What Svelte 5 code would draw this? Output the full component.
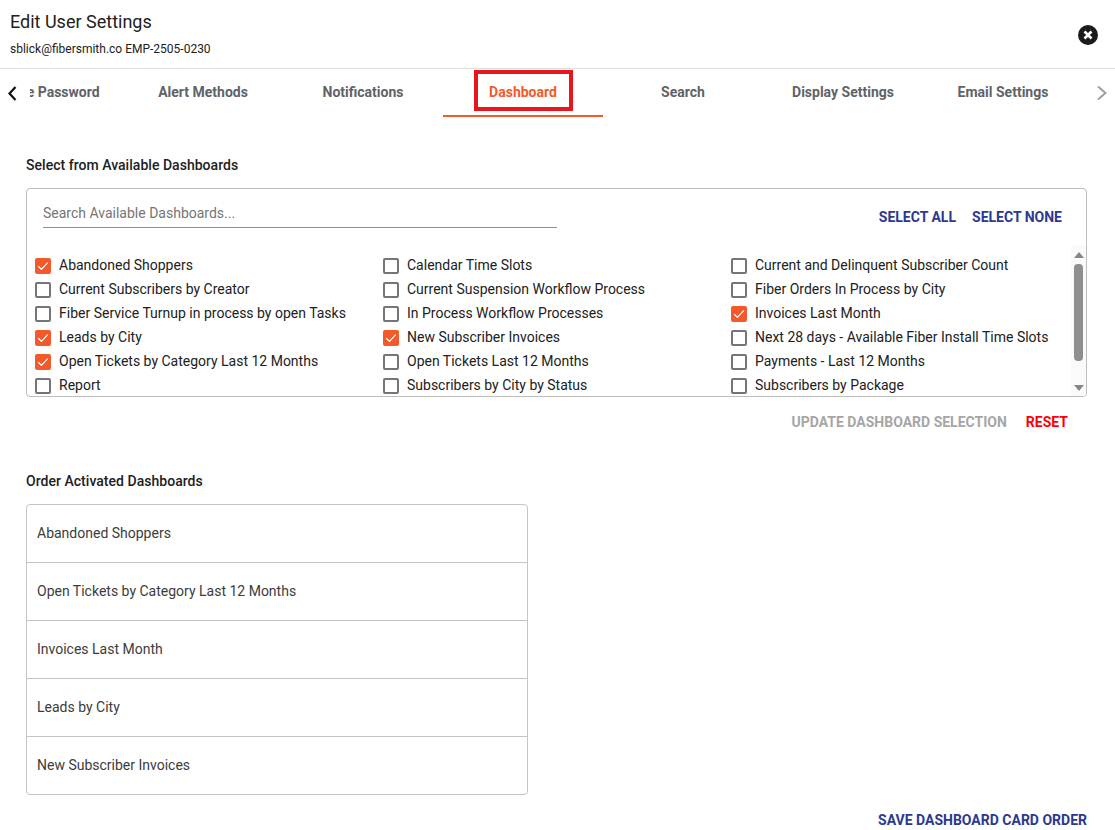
<script lang="ts">
  const tabs = ['Change Password', 'Alert Methods', 'Notifications', 'Dashboard', 'Search', 'Display Settings', 'Email Settings'];
  const activeTab = 'Dashboard';

  const available = [
    { label: 'Abandoned Shoppers', on: true },
    { label: 'Calendar Time Slots', on: false },
    { label: 'Current and Delinquent Subscriber Count', on: false },
    { label: 'Current Subscribers by Creator', on: false },
    { label: 'Current Suspension Workflow Process', on: false },
    { label: 'Fiber Orders In Process by City', on: false },
    { label: 'Fiber Service Turnup in process by open Tasks', on: false },
    { label: 'In Process Workflow Processes', on: false },
    { label: 'Invoices Last Month', on: true },
    { label: 'Leads by City', on: true },
    { label: 'New Subscriber Invoices', on: true },
    { label: 'Next 28 days - Available Fiber Install Time Slots', on: false },
    { label: 'Open Tickets by Category Last 12 Months', on: true },
    { label: 'Open Tickets Last 12 Months', on: false },
    { label: 'Payments - Last 12 Months', on: false },
    { label: 'Report', on: false },
    { label: 'Subscribers by City by Status', on: false },
    { label: 'Subscribers by Package', on: false }
  ];

  const ordered = [
    'Abandoned Shoppers',
    'Open Tickets by Category Last 12 Months',
    'Invoices Last Month',
    'Leads by City',
    'New Subscriber Invoices'
  ];
</script>

<div class="dialog">
  <header class="head">
    <div>
      <h1 class="title">Edit User Settings</h1>
      <p class="sub">sblick@fibersmith.co EMP-2505-0230</p>
    </div>
    <button class="close" type="button" aria-label="Close">
      <svg width="20" height="20" viewBox="0 0 20 20">
        <circle cx="10" cy="10" r="10" fill="#1c1c1c" />
        <path d="M6.500 6.500l7 7M13.500 6.500l-7 7" stroke="#fff" stroke-width="2.600" fill="none" />
      </svg>
    </button>
  </header>

  <nav class="tabbar">
    <button class="arrow" type="button" aria-label="Previous">
      <svg width="12" height="16" viewBox="0 0 12 16">
        <path d="M9.500 2L3.500 8.500l6 6.500" stroke="#111" stroke-width="2.200" fill="none" />
      </svg>
    </button>
    <div class="tabs">
      <div class="strip">
        {#each tabs as tab}
          <div class="tab" class:active={tab === activeTab}>{tab}</div>
        {/each}
      </div>
    </div>
    <button class="arrow" type="button" aria-label="Next">
      <svg width="12" height="16" viewBox="0 0 12 16">
        <path d="M2 1.500L9.500 8 2 14.500" stroke="#9e9e9e" stroke-width="1.900" fill="none" />
      </svg>
    </button>
    <div class="callout"></div>
  </nav>

  <main class="body">
    <h2 class="label first">Select from Available Dashboards</h2>
    <section class="picker">
      <div class="picker-top">
        <div class="search">Search Available Dashboards...</div>
        <div class="links">
          <span class="link">SELECT ALL</span>
          <span class="link">SELECT NONE</span>
        </div>
      </div>
      <div class="list-wrap">
        <div class="grid">
          {#each available as item}
            <label class="check">
              <span class="box" class:on={item.on}>
                {#if item.on}
                  <svg width="16" height="16" viewBox="0 0 16 16">
                    <path d="M3.300 8.300l3.200 3.100 6.200-6.800" stroke="#fff" stroke-width="1.300" fill="none" />
                  </svg>
                {/if}
              </span>
              {item.label}
            </label>
          {/each}
        </div>
        <div class="scrollbar">
          <span class="up"></span>
          <span class="thumb"></span>
          <span class="down"></span>
        </div>
      </div>
    </section>
    <div class="actions">
      <span class="update">UPDATE DASHBOARD SELECTION</span>
      <span class="reset">RESET</span>
    </div>

    <h2 class="label second">Order Activated Dashboards</h2>
    <ul class="order">
      {#each ordered as name}
        <li>{name}</li>
      {/each}
    </ul>
    <div class="save-row">
      <span class="link">SAVE DASHBOARD CARD ORDER</span>
    </div>
  </main>
</div>

<style>
  :global(body) {
    margin: 0;
    background: #fff;
    overflow: hidden;
  }
  .dialog {
    width: 1115px;
    height: 830px;
    overflow: hidden;
    font-family: Roboto, "Liberation Sans", sans-serif;
    color: #212121;
  }
  button {
    border: none;
    background: none;
    padding: 0;
    cursor: pointer;
    display: flex;
  }
  .head {
    height: 69px;
    box-sizing: border-box;
    padding: 11px 17px 0 10px;
    display: flex;
    justify-content: space-between;
    border-bottom: 1px solid #e0e0e0;
  }
  .title {
    margin: 0;
    font-size: 18px;
    font-weight: 400;
    line-height: 21px;
  }
  .sub {
    margin: 10px 0 0;
    font-size: 12px;
    line-height: 14px;
  }
  .close {
    margin-top: 14px;
  }
  .tabbar {
    position: relative;
    height: 48px;
    display: flex;
    align-items: flex-start;
  }
  .arrow {
    width: 27px;
    height: 48px;
    align-items: center;
    justify-content: center;
    margin-left: -2px;
  }
  .arrow:last-of-type {
    margin-left: 5px;
  }
  .tabs {
    width: 1053px;
    overflow: hidden;
    margin-left: 5px;
  }
  .strip {
    display: flex;
    margin-left: -67px;
  }
  .tab {
    flex: none;
    width: 160px;
    height: 48px;
    box-sizing: border-box;
    padding-top: 15px;
    text-align: center;
    font-size: 14px;
    line-height: 16px;
    font-weight: 700;
    color: #5f6368;
  }
  .tab.active {
    color: #f4592a;
    border-bottom: 2px solid #f4592a;
  }
  .callout {
    position: absolute;
    left: 474px;
    top: 1px;
    width: 99px;
    height: 41px;
    box-sizing: border-box;
    border: 4px solid #e8161c;
  }
  .body {
    padding: 0 28px 0 26px;
  }
  .label {
    margin: 0;
    font-size: 14px;
    line-height: 16px;
    font-weight: 500;
    letter-spacing: 0.03px;
  }
  .label.first {
    padding-top: 40px;
  }
  .picker {
    margin-top: 15px;
    height: 209px;
    box-sizing: border-box;
    border: 1px solid #bdbdbd;
    border-radius: 4px;
    overflow: hidden;
    display: flex;
    flex-direction: column;
  }
  .picker-top {
    height: 56px;
    flex: none;
    display: flex;
    justify-content: space-between;
    padding: 0 24px 0 16px;
  }
  .search {
    width: 514px;
    height: 39px;
    box-sizing: border-box;
    padding-top: 16px;
    font-size: 14px;
    line-height: 16px;
    color: #757575;
    border-bottom: 1px solid #8f8f8f;
  }
  .links {
    display: flex;
    gap: 16px;
    padding-top: 20px;
  }
  .link {
    font-size: 14px;
    line-height: 16px;
    font-weight: 700;
    color: #2b3990;
  }
  .list-wrap {
    flex: 1;
    min-height: 0;
    display: flex;
    justify-content: space-between;
  }
  .grid {
    display: grid;
    grid-template-columns: repeat(3, 348px);
    grid-auto-rows: 24px;
    padding: 8px 0 0 8px;
    overflow: hidden;
  }
  .check {
    display: flex;
    align-items: center;
    gap: 8px;
    font-size: 14px;
    white-space: nowrap;
  }
  .box {
    flex: none;
    width: 16px;
    height: 16px;
    box-sizing: border-box;
    margin-top: 1px;
    border: 2px solid #757575;
    border-radius: 2px;
    position: relative;
  }
  .box.on {
    background: #f4592a;
    border-color: #f4592a;
  }
  .box svg {
    position: absolute;
    left: -2px;
    top: -2px;
  }
  .scrollbar {
    flex: none;
    width: 15px;
    background: #fafafa;
    display: flex;
    flex-direction: column;
    align-items: center;
    padding-top: 7px;
    box-sizing: border-box;
  }
  .up,
  .down {
    flex: none;
    width: 0;
    height: 0;
    border-left: 5px solid transparent;
    border-right: 5px solid transparent;
  }
  .up {
    border-bottom: 6px solid #868686;
  }
  .down {
    margin-top: 24px;
    border-top: 6px solid #868686;
  }
  .thumb {
    flex: none;
    width: 9px;
    height: 97px;
    margin-top: 6px;
    border-radius: 4px;
    background: #8f8f8f;
  }
  .actions {
    display: flex;
    justify-content: flex-end;
    gap: 19px;
    padding: 17px 19px 0 0;
    font-size: 14px;
    line-height: 16px;
    font-weight: 700;
  }
  .update {
    color: #a6a6a6;
  }
  .reset {
    color: #fb0007;
  }
  .label.second {
    margin-top: 43px;
  }
  .order {
    list-style: none;
    margin: 15px 0 0;
    padding: 0;
    width: 502px;
    box-sizing: border-box;
    border: 1px solid #c4c4c4;
    border-radius: 4px;
  }
  .order li {
    height: 58px;
    box-sizing: border-box;
    padding: 0 10px 2px;
    display: flex;
    align-items: center;
    font-size: 14px;
    color: #3c3c3c;
    border-bottom: 1px solid #c4c4c4;
  }
  .order li:last-child {
    height: 57px;
    border-bottom: none;
  }
  .save-row {
    display: flex;
    justify-content: flex-end;
    padding-top: 17px;
  }
</style>
